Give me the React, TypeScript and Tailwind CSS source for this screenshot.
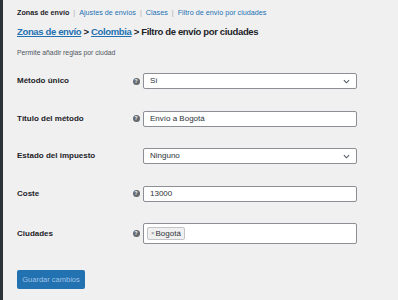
import React from "react";

const Help = () => (
  <span className="flex h-[7px] w-[7px] items-center justify-center rounded-full bg-[#646970] text-[5px] font-bold leading-none text-white">?</span>
);

const Chevron = () => (
  <svg width="7" height="5" viewBox="0 0 8 5" className="shrink-0">
    <path d="M1 1 L4 4 L7 1" fill="none" stroke="#50575e" strokeWidth="1.2" />
  </svg>
);

function Row({ label, help, children }: { label: string; help: boolean; children: React.ReactNode }) {
  return (
    <div className="flex items-center">
      <div className="w-[112px] shrink-0 text-[8px] font-bold text-[#1d2327]">{label}</div>
      <div className="flex w-[14px] shrink-0 justify-center">{help ? <Help /> : null}</div>
      <div className="w-[214px] shrink-0">{children}</div>
    </div>
  );
}

export default function App() {
  return (
    <div className="flex min-h-[300px] w-[398px] bg-[#f0f0f1]" style={{ fontFamily: "'Liberation Sans', Arial, sans-serif" }}>
      <div className="w-[3px] shrink-0 bg-[#2c3338]" />
      <div className="flex-1 pl-[14px] pt-[8px]">
        <div className="flex items-center text-[7.2px] leading-[10px] text-[#2271b1]">
          <span className="font-bold text-[#1d2327]">Zonas de envío</span>
          <span className="mx-[4px] text-[#a7aaad]">|</span>
          <span>Ajustes de envíos</span>
          <span className="mx-[4px] text-[#a7aaad]">|</span>
          <span>Clases</span>
          <span className="mx-[4px] text-[#a7aaad]">|</span>
          <span>Filtro de envío por ciudades</span>
        </div>
        <div className="mt-[8px] text-[9.5px] font-bold leading-[12px] tracking-[-0.35px] text-[#1d2327]">
          <span className="text-[#2271b1] underline">Zonas de envío</span>
          <span> &gt; </span>
          <span className="text-[#2271b1] underline">Colombia</span>
          <span> &gt; Filtro de envío por ciudades</span>
        </div>
        <div className="mt-[10px] text-[6.8px] leading-[9px] text-[#50575e]">Permite añadir reglas por ciudad</div>

        <div className="mt-[16px] flex flex-col gap-[21.5px]">
          <Row label="Método único" help>
            <div className="flex h-[16px] items-center justify-between rounded-[2px] border border-[#8c8f94] bg-white pl-[6px] pr-[6px] text-[8px] text-[#2c3338]">
              <span>Sí</span>
              <Chevron />
            </div>
          </Row>
          <Row label="Título del método" help>
            <div className="flex h-[16px] items-center rounded-[2px] border border-[#8c8f94] bg-white pl-[6px] text-[8px] text-[#2c3338]">
              Envío a Bogotá
            </div>
          </Row>
          <Row label="Estado del impuesto" help={false}>
            <div className="flex h-[16px] items-center justify-between rounded-[2px] border border-[#8c8f94] bg-white pl-[6px] pr-[6px] text-[8px] text-[#2c3338]">
              <span>Ninguno</span>
              <Chevron />
            </div>
          </Row>
          <Row label="Coste" help>
            <div className="flex h-[16px] items-center rounded-[2px] border border-[#8c8f94] bg-white pl-[6px] text-[8px] text-[#2c3338]">
              13000
            </div>
          </Row>
          <Row label="Ciudades" help>
            <div className="flex h-[21px] items-center rounded-[2px] border border-[#8c8f94] bg-white pl-[3px] text-[8px] text-[#2c3338]">
              <span className="flex h-[13px] items-center rounded-[2px] border border-[#c3c4c7] bg-[#f0f0f1] px-[3px]">
                <span className="mr-[1px] text-[6px] text-[#787c82]">×</span>Bogotá
              </span>
            </div>
          </Row>
        </div>

        <div className="mt-[26px] flex h-[19px] w-[68px] items-center justify-center rounded-[2px] bg-[#2271b1] text-[7.5px] text-[#9ec2e6]">
          Guardar cambios
        </div>
      </div>
    </div>
  );
}
